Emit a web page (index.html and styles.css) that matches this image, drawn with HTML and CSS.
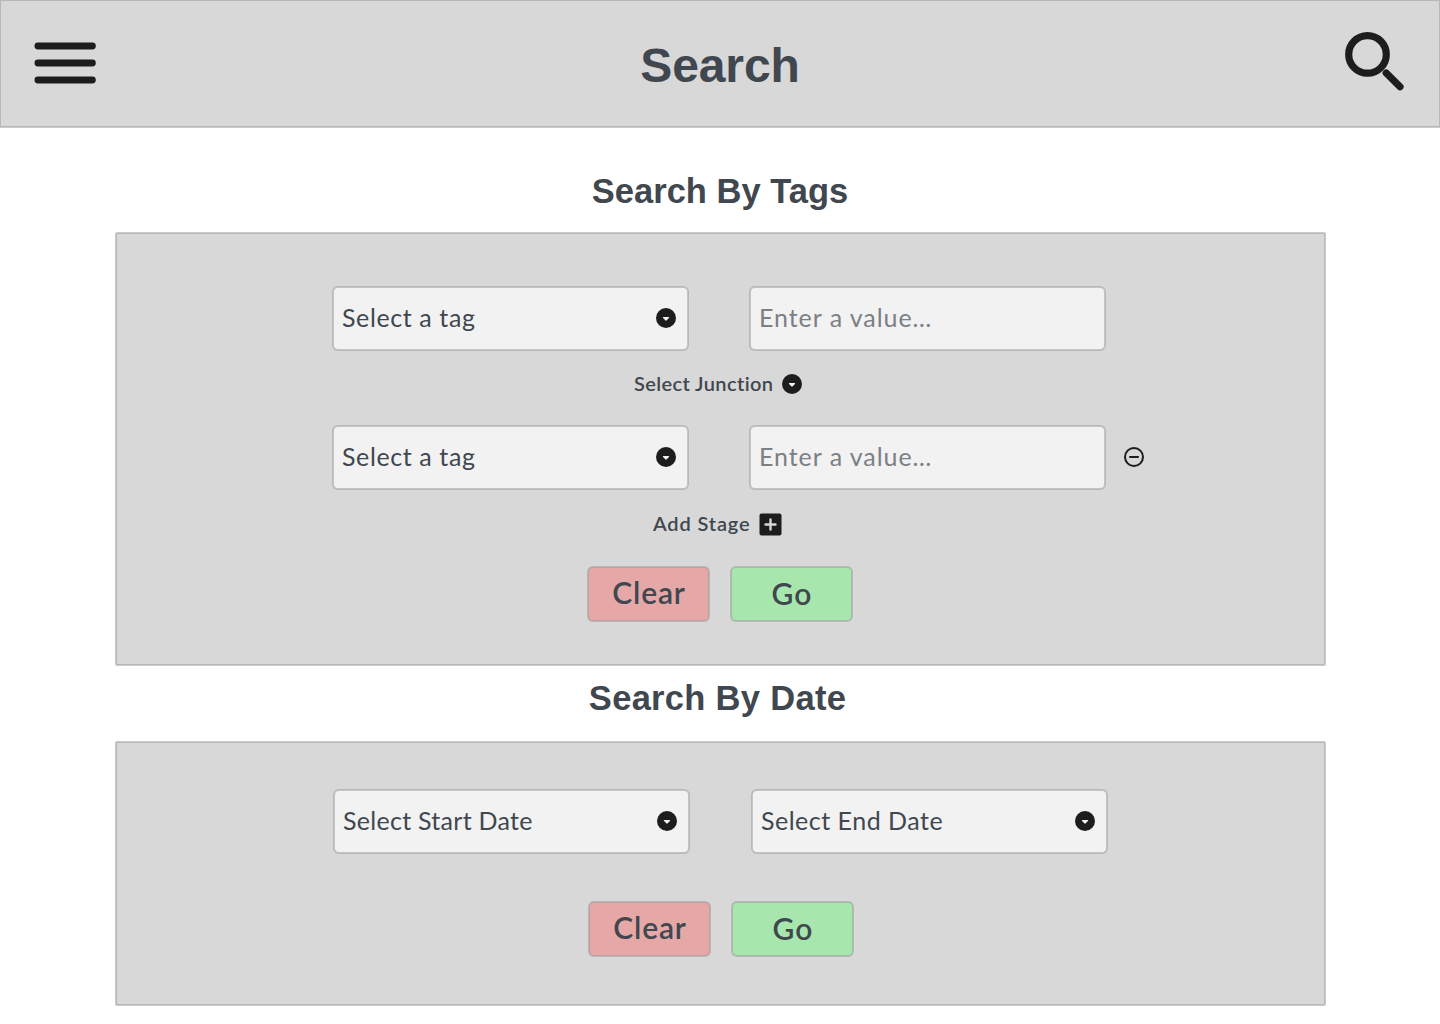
FILE: index.html
```html
<!DOCTYPE html>
<html lang="en">
<head>
<meta charset="utf-8">
<title>Search</title>
<link rel="stylesheet" href="styles.css">
</head>
<body>
<svg width="0" height="0" class="defs">
  <symbol id="drop" viewBox="0 0 20 20">
    <circle cx="10" cy="10" r="10" fill="#1d1d1d"/>
    <path d="M7.4 9.6H12.6L10 12.2Z" fill="#f2f2f2" stroke="#f2f2f2" stroke-width="1.1" stroke-linejoin="round"/>
  </symbol>
</svg>
<header class="topbar outlined">
  <svg class="menu" viewBox="0 0 62 42"><path d="M3.9 4H58.4M3.9 21H58.4M3.9 38H58.4" stroke="#1d1d1d" stroke-width="6.8" stroke-linecap="round"/></svg>
  <h1>Search</h1>
  <svg class="magnifier" viewBox="0 0 60 60" fill="none" stroke="#1d1d1d"><circle cx="23.5" cy="23.4" r="18.8" stroke-width="7.2"/><path d="M42.2 42L56 55.8" stroke-width="7.2" stroke-linecap="round"/></svg>
</header>
<main>
  <h2 class="tags-title">Search By Tags</h2>
  <section class="panel tags outlined">
    <div class="row">
      <div class="field outlined"><span class="t-tag">Select a tag</span><svg class="drop"><use href="#drop"/></svg></div>
      <div class="field hint outlined"><span class="t-value">Enter a value…</span></div>
    </div>
    <div class="link junction"><span>Select Junction</span><svg class="drop"><use href="#drop"/></svg></div>
    <div class="row">
      <div class="field outlined"><span class="t-tag">Select a tag</span><svg class="drop"><use href="#drop"/></svg></div>
      <div class="field hint outlined"><span class="t-value">Enter a value…</span></div>
      <svg class="remove" viewBox="0 0 20 20" fill="none" stroke="#1d1d1d"><circle cx="10" cy="10" r="9" stroke-width="2"/><path d="M5.2 10H14.8" stroke-width="2"/></svg>
    </div>
    <div class="link stage"><span>Add Stage</span><svg class="plus" viewBox="0 0 23 23"><rect x=".5" y=".5" width="22" height="22" rx="2" fill="#1d1d1d"/><path d="M11.5 6.5V16.5M6.5 11.5H16.5" stroke="#d8d8d8" stroke-width="2.4" stroke-linecap="round"/></svg></div>
    <div class="actions">
      <button class="clear outlined"><span>Clear</span></button>
      <button class="go outlined"><span>Go</span></button>
    </div>
  </section>
  <h2 class="date-title">Search By Date</h2>
  <section class="panel date outlined">
    <div class="row">
      <div class="field outlined"><span class="t-start">Select Start Date</span><svg class="drop"><use href="#drop"/></svg></div>
      <div class="field outlined"><span class="t-end">Select End Date</span><svg class="drop"><use href="#drop"/></svg></div>
    </div>
    <div class="actions">
      <button class="clear outlined"><span>Clear</span></button>
      <button class="go outlined"><span>Go</span></button>
    </div>
  </section>
</main>
</body>
</html>
```
FILE: styles.css
```css
* { box-sizing: border-box; }
body { margin: 0; min-height: 1024px; background: #fff; color: #40474f; font-family: Lato, sans-serif; }
svg { display: block; flex: none; }
.defs { display: none; }
h1, h2 { margin: 0; font-family: "Liberation Sans", Arial, sans-serif; font-weight: 700; text-align: center; white-space: nowrap; }

/* hairline centred on the box edge */
.outlined { border: 1px solid rgba(151, 151, 151, .5); box-shadow: 0 0 0 1px rgba(151, 151, 151, .5); }

.topbar { height: 127px; padding: 0 35px 0 33px; display: flex; justify-content: space-between; background: #d8d8d8; }
.menu { width: 62px; height: 42px; margin-top: 41px; }
.topbar h1 { font-size: 48px; line-height: 56px; margin: 37px 0 0; letter-spacing: -.1px; }
.magnifier { width: 60px; height: 60px; margin-top: 30px; }

h2 { font-size: 34.5px; line-height: 40px; }
.tags-title { margin-top: 44px; }
.date-title { margin: 13px 5px 0 0; letter-spacing: .3px; }

.panel { width: 1209px; margin-left: 116px; background: #d8d8d8; border-radius: 1px; display: flex; flex-direction: column; }
.tags { height: 432px; margin-top: 22px; padding: 53px 0 0 216px; }
.date { height: 263px; margin-top: 24px; padding: 47px 0 0 217px; }
.row { display: flex; align-items: center; gap: 62px; }
.date .row { gap: 63px; }
.field { width: 355px; height: 63px; padding: 0 11px 0 8px; display: flex; align-items: center; justify-content: space-between; background: #f2f2f2; border-radius: 5px; font-size: 25px; line-height: 30px; white-space: nowrap; }
.field span { padding-bottom: 4px; }
.t-tag { letter-spacing: .6px; }
.t-value { letter-spacing: .95px; }
.t-start { letter-spacing: .28px; }
.t-end { letter-spacing: .5px; }
.hint { color: #7b8085; }
.drop { width: 20px; height: 20px; }
.field .drop, .remove { margin-bottom: 1px; }
.remove { width: 20px; height: 20px; margin-left: -43px; }

.link { display: flex; align-items: center; justify-content: space-between; height: 24px; font-size: 20px; line-height: 24px; font-weight: 600; white-space: nowrap; }
.link span { padding-bottom: 2px; }
.junction { width: 168px; margin: 22px 0 30px 301px; letter-spacing: .4px; }
.stage { width: 129px; margin: 23px 0 0 320px; letter-spacing: .85px; }
.plus { width: 23px; height: 23px; }

.actions { display: flex; gap: 22px; margin: 31px 0 0 255px; }
.date .actions { margin-top: 49px; }
button { width: 121px; height: 54px; padding: 0; display: flex; align-items: center; justify-content: center; border-radius: 5px; color: inherit; font: 600 30px/36px Lato, sans-serif; }
.clear { background: #e6a7a7; }
.go { background: #a7e7ae; }
.clear span { padding: 0 0 4px 1px; letter-spacing: .8px; }
.go span { padding: 0 0 3px 1px; letter-spacing: 1px; }
```
